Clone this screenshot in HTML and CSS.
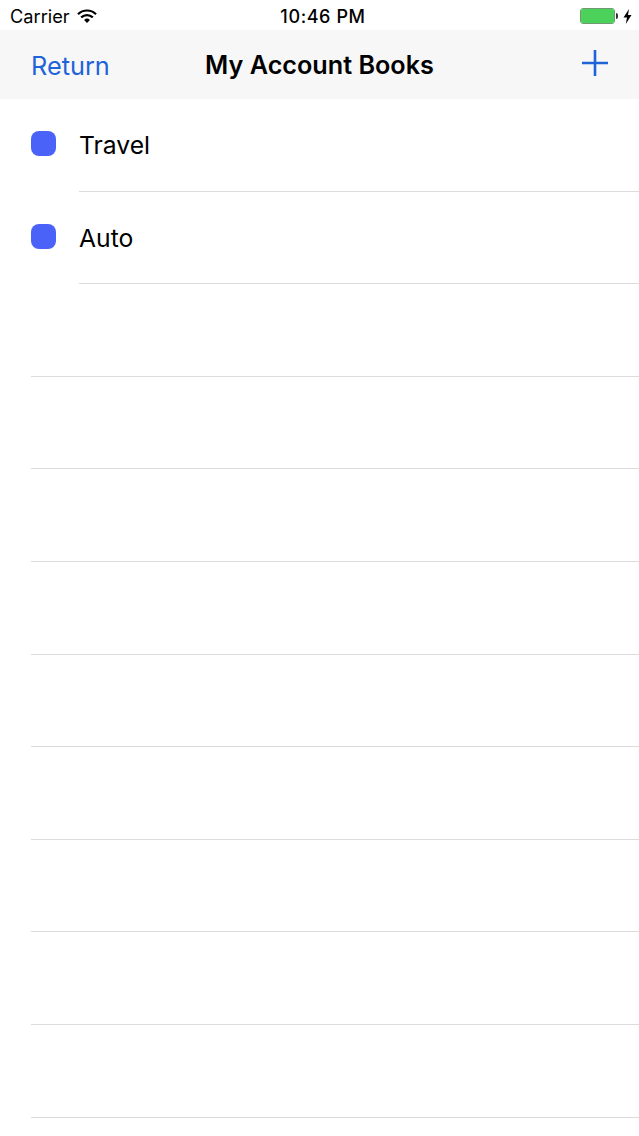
FILE: index.html
```html
<!DOCTYPE html>
<html lang="en">
<head>
    <meta charset="UTF-8">
    <meta name="viewport" content="width=device-width, initial-scale=1.0">
    <title>My Account Books</title>
    <link rel="stylesheet" href="styles.css">
</head>
<body>
    <div class="status-bar">
        <div class="status-left">
            <span class="carrier">Carrier</span>
            <svg class="wifi" width="20" height="15" viewBox="0 0 20 15">
                <path d="M1 5.2a12.8 12.8 0 0 1 18 0" fill="none" stroke="#000" stroke-width="2.2"/>
                <path d="M4.2 8.4a8.3 8.3 0 0 1 11.6 0" fill="none" stroke="#000" stroke-width="2.2"/>
                <path d="M7.1 11a4.2 4.2 0 0 1 5.8 0L10 14z" fill="#000"/>
            </svg>
        </div>
        <span class="clock">10:46 PM</span>
        <div class="status-right">
            <div class="battery"><div class="battery-level"></div></div>
            <div class="battery-tip"></div>
            <svg class="bolt" width="9" height="15" viewBox="0 0 9 15">
                <path d="M6 0L0.5 8.5H4L2.8 15L8.5 6H5z" fill="#000"/>
            </svg>
        </div>
    </div>

    <div class="nav-bar">
        <span class="nav-return">Return</span>
        <h1 class="nav-title">My Account Books</h1>
        <svg class="nav-add" width="28" height="28" viewBox="0 0 28 28">
            <path d="M14 1V27M1 14H27" stroke="#1f63d8" stroke-width="2.6" fill="none"/>
        </svg>
    </div>

    <div class="book-list">
        <div class="book-row">
            <span class="book-dot"></span>
            <div class="book-main"><span class="book-name">Travel</span></div>
        </div>
        <div class="book-row">
            <span class="book-dot"></span>
            <div class="book-main"><span class="book-name">Auto</span></div>
        </div>
        <div class="empty-row"></div>
        <div class="empty-row"></div>
        <div class="empty-row"></div>
        <div class="empty-row"></div>
        <div class="empty-row"></div>
        <div class="empty-row"></div>
        <div class="empty-row"></div>
        <div class="empty-row"></div>
        <div class="empty-row"></div>
    </div>
</body>
</html>
```

FILE: styles.css
```css
body {
    margin: 0;
    height: 1136px;
    overflow: hidden;
    background: #fff;
    color: #000;
    font-family: Inter, "Liberation Sans", sans-serif;
}

.status-bar {
    height: 30px;
    box-sizing: border-box;
    padding: 2px 7px 0 10px;
    display: grid;
    grid-template-columns: 1fr auto 1fr;
    align-items: center;
    background: #fff;
}

.status-left {
    display: flex;
    align-items: center;
    gap: 7px;
}

.carrier {
    font-size: 18.2px;
}

.clock {
    margin-left: 4px;
    font-size: 18px;
    font-weight: 500;
    letter-spacing: 0.6px;
}

.status-right {
    display: flex;
    align-items: center;
    justify-content: flex-end;
}

.battery {
    width: 35px;
    height: 16px;
    box-sizing: border-box;
    border: 1px solid #6f9a72;
    border-radius: 3px;
    overflow: hidden;
}

.battery-level {
    height: 100%;
    background: #4cd25a;
}

.battery-tip {
    width: 2px;
    height: 6px;
    margin-left: 1px;
    background: #333;
    border-radius: 0 2px 2px 0;
}

.bolt {
    margin-left: 5px;
}

.nav-bar {
    height: 69px;
    padding: 0 31px;
    display: grid;
    grid-template-columns: 1fr auto 1fr;
    align-items: center;
    background: #f7f7f8;
}

.nav-return {
    padding-top: 1px;
    font-size: 25.3px;
    color: #1f63d8;
}

.nav-title {
    margin: 0;
    font-size: 25.2px;
    font-weight: 600;
}

.nav-add {
    justify-self: end;
    margin: -3px -1px 0 0;
}

.book-row {
    height: 92.6px;
    padding-left: 31px;
    display: flex;
    align-items: stretch;
    box-sizing: border-box;
}

.book-dot {
    width: 25px;
    height: 25px;
    margin: 32px 23px 0 0;
    flex: none;
    background: #4a62f7;
    border-radius: 8px;
}

.book-main {
    flex: 1;
    display: flex;
    align-items: center;
    padding-top: 1px;
    border-bottom: 1px solid #dcdcdf;
}

.book-name {
    font-size: 24.7px;
}

.empty-row {
    height: 92.6px;
    margin-left: 31px;
    box-sizing: border-box;
    border-bottom: 1px solid #dcdcdf;
}
```
